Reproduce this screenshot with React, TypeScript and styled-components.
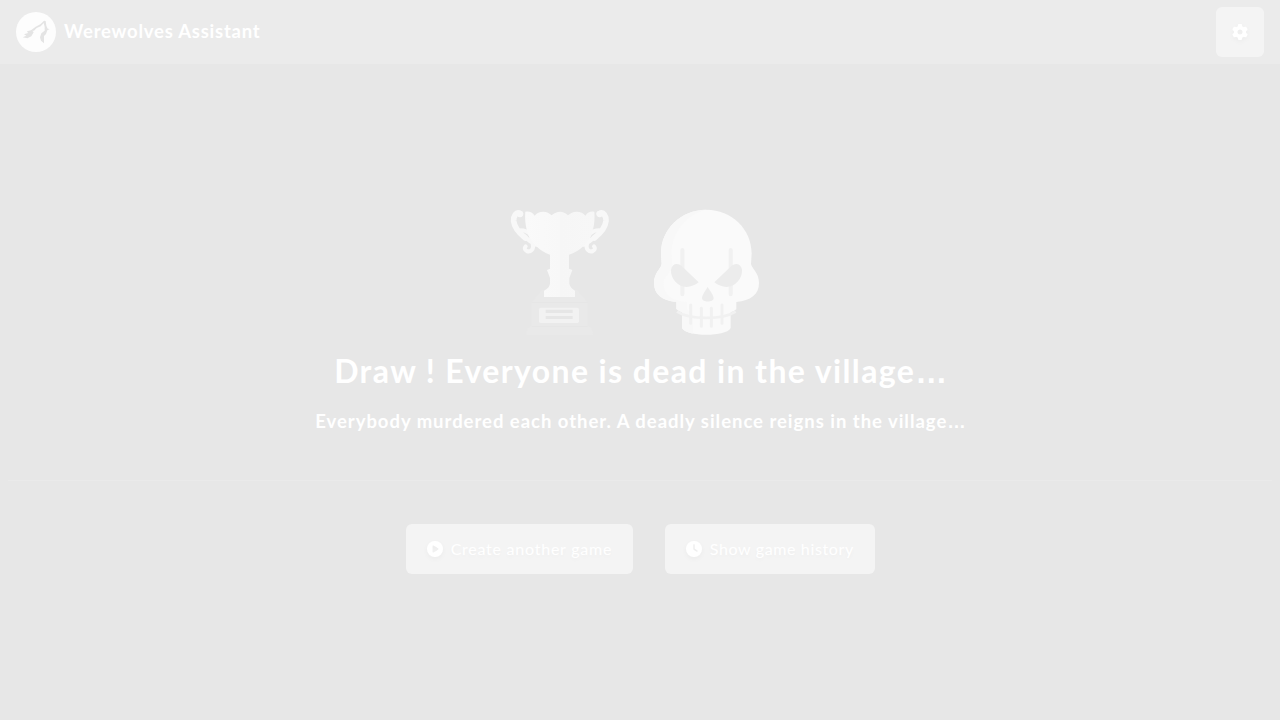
import React from "react";
import styled, { createGlobalStyle } from "styled-components";
import { FaCirclePlay, FaClock, FaGear } from "react-icons/fa6";

const GlobalStyle = createGlobalStyle`
  * { box-sizing: border-box; }
  body {
    margin: 0;
    background: #e7e7e7;
    color: #fff;
    font-family: Lato, "Liberation Sans", sans-serif;
  }
`;

const Page = styled.div`
  height: 720px;
  display: flex;
  flex-direction: column;
  overflow: hidden;
`;

const NavBar = styled.header`
  height: 64px;
  padding: 0 16px;
  display: flex;
  align-items: center;
  justify-content: space-between;
  background: #ebebeb;
`;

const Brand = styled.div`
  display: flex;
  align-items: center;
  gap: 8px;
`;

const Text = styled.span<{ $size: number; $spacing: number; $bold?: boolean }>`
  font-size: ${(p) => p.$size}px;
  letter-spacing: ${(p) => p.$spacing}px;
  margin-right: -${(p) => p.$spacing}px;
  font-weight: ${(p) => (p.$bold ? 700 : 400)};
  white-space: nowrap;
`;

const BrandName = styled(Text)`
  padding-bottom: 3px;
`;

const ButtonLabel = styled(Text)`
  padding-bottom: 2px;
`;

const Ellipsis = styled.span`
  font-family: "Liberation Sans", sans-serif;
  letter-spacing: 0;
  line-height: 1;
`;

const Button = styled.button<{ $width: number }>`
  width: ${(p) => p.$width}px;
  height: 50px;
  padding: 0;
  display: flex;
  align-items: center;
  justify-content: center;
  gap: 8px;
  border: 0;
  border-radius: 6px;
  background: #f4f4f4;
  color: #fff;
  font-family: inherit;
  text-shadow: 0 2px 4px rgba(0, 0, 0, 0.03);

  svg {
    flex: none;
    filter: drop-shadow(0 2px 2px rgba(0, 0, 0, 0.03));
  }
`;

const Main = styled.main`
  flex: 1;
  padding: 136px 8px 0;
  display: flex;
  flex-direction: column;
  align-items: center;
`;

const Emblems = styled.div`
  display: flex;
  gap: 25px;
  height: 145px;
`;

const Title = styled.h1`
  margin: 4px 0 0;
  height: 44px;
  line-height: 44px;
  font-size: 0;
`;

const Subtitle = styled.h2`
  margin: 14px 0 0;
  height: 28px;
  line-height: 28px;
  font-size: 0;
`;

const Divider = styled.hr`
  width: 100%;
  height: 1px;
  margin: 45px 0 43px;
  border: 0;
  background: #eaeaea;
`;

const Actions = styled.div`
  display: flex;
  gap: 32px;
`;

const WolfLogo = () => (
  <svg width="40" height="40" viewBox="18 18 120 120">
    <circle cx="78" cy="78" r="60" fill="#fdfdfd" />
    <path
      fill="#e4e4e4"
      d="M38 94 49 89 42 85 54 81 51 76 63 73 77 62 91 55 102 44 107 45 109 59 113 68 119 69 112 73 108 84 102 90 102 112 93 104 90 94 94 82 104 74 104 63 101 51 92 61 80 66 72 74H67L71 79 64 91 52 97Z"
    />
  </svg>
);

const Trophy = () => (
  <svg width="120" height="145" viewBox="0 0 360 435">
    <defs>
      <linearGradient id="cup" x1="0" x2="1">
        <stop offset="0" stopColor="#fafafa" />
        <stop offset="0.5" stopColor="#f8f8f8" />
        <stop offset="0.5" stopColor="#f6f6f6" />
        <stop offset="1" stopColor="#f7f7f7" />
      </linearGradient>
    </defs>
    <g id="handle" fill="none" stroke="#f8f8f8" strokeLinecap="round">
      <path strokeWidth="17" d="M61 41C48 34 40 49 41 63C43 83 56 98 76 114" />
      <path strokeWidth="12" d="M72 109Q88 124 108 134M62 91Q78 91 88 100C96 109 97 119 98 132C103 149 91 157 80 153C73 150 73 143 77 139" />
      <circle cx="60" cy="42" r="3" strokeWidth="13" />
    </g>
    <use href="#handle" transform="translate(359 0) scale(-1 1)" />
    <path
      fill="url(#cup)"
      d="M76 35Q94 32 104 47Q113 35 130 35Q145 36 155 46Q167 35 180 35Q193 35 204 46Q214 36 230 35Q247 35 256 47Q266 32 283 35C286 74 278 112 250 139Q231 157 207 164V206L217 210 208 234V251Q211 264 225 272V291H132V272Q148 264 150 251V234L141 210 150 206V164Q127 157 109 139C81 112 73 74 76 35Z"
    />
    <path fill="#e9e9e9" d="M132 270H125L95 307V379Q79 380 79 405H279Q279 380 263 379V307L232 270H225V291H132Z" />
    <path fill="#e5e5e5" d="M95 306H263V308H95Z M95 379H263V381H95Z" />
    <rect x="117" y="323" width="120" height="46" rx="5" fill="#f2f2f2" />
    <path fill="#e6e6e6" d="M137 329H218V339H137Z M137 348H218V357H137Z" />
  </svg>
);

const Skull = () => (
  <svg width="135" height="145" viewBox="0 0 405 435">
    <path
      fill="#fafafa"
      d="M184 29C107 29 49 87 48 160L50 192C47 208 27 218 27 249C27 284 52 302 94 306V327Q101 333 111 337V384C121 411 247 411 257 384V337Q267 334 274 328V306C317 302 342 284 342 249C342 218 321 207 318 192L320 160C319 87 261 29 184 29Z"
    />
    <path
      fill="#f8f8f8"
      d="M184 29C107 29 49 87 48 160L50 192C47 208 27 218 27 249C27 284 52 302 94 306V327Q101 333 111 337V384Q116 394 143 401V345L126 327V306C75 302 54 283 56 240L82 205 80 160C80 94 124 44 184 29Z"
    />
    <g fill="none" stroke="#f1f1f1" strokeLinecap="round">
      <path strokeWidth="12" d="M112 150V283M257 150V283" />
      <path strokeWidth="9" d="M137 315V370M169 325V379M199 325V379M231 315V370" />
      <path strokeWidth="8" strokeLinecap="butt" d="M96 335C135 360 233 360 272 335" />
    </g>
    <g fill="#ececec">
      <path d="M161 247L113 201C100 187 81 190 78 209C76 235 98 260 125 261Q144 260 161 247Z" />
      <path d="M208 247L256 201C269 187 288 190 291 209C293 235 271 260 244 261Q225 260 208 247Z" />
      <path d="M188 260C183 271 171 284 171 295C172 308 205 308 206 295C206 284 193 271 188 260Z" />
    </g>
  </svg>
);

export default function App() {
  return (
    <Page>
      <GlobalStyle />
      <NavBar>
        <Brand>
          <WolfLogo />
          <BrandName $size={18.5} $spacing={0.76} $bold>Werewolves Assistant</BrandName>
        </Brand>
        <Button $width={48} aria-label="Settings">
          <FaGear size={16} />
        </Button>
      </NavBar>
      <Main>
        <Emblems>
          <Trophy />
          <Skull />
        </Emblems>
        <Title>
          <Text $size={32} $spacing={1.38} $bold>
            Draw ! Everyone is dead in the village<Ellipsis>…</Ellipsis>
          </Text>
        </Title>
        <Subtitle>
          <Text $size={18.5} $spacing={0.97} $bold>
            Everybody murdered each other. A deadly silence reigns in the village<Ellipsis>…</Ellipsis>
          </Text>
        </Subtitle>
        <Divider />
        <Actions>
          <Button $width={227}>
            <FaCirclePlay size={16} />
            <ButtonLabel $size={16} $spacing={0.76}>Create another game</ButtonLabel>
          </Button>
          <Button $width={210}>
            <FaClock size={16} />
            <ButtonLabel $size={16} $spacing={0.64}>Show game history</ButtonLabel>
          </Button>
        </Actions>
      </Main>
    </Page>
  );
}
